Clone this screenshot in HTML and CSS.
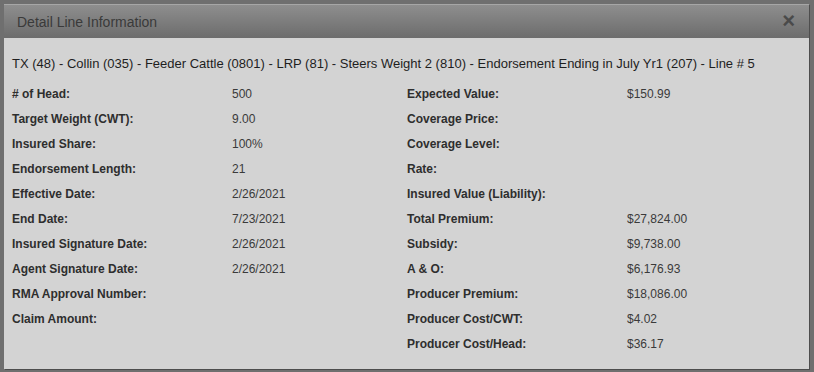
FILE: index.html
```html
<!DOCTYPE html>
<html lang="en">
<head>
    <meta charset="UTF-8">
    <title>Detail Line Information</title>
    <link rel="stylesheet" href="styles.css">
</head>
<body>
    <!-- Detail Line Dialog -->
    <div class="dialog">
        <div class="dialog-header">
            <span class="dialog-title">Detail Line Information</span>
            <span class="dialog-close">&times;</span>
        </div>

        <div class="dialog-body">
            <div class="line-name">TX (48) - Collin (035) - Feeder Cattle (0801) - LRP (81) - Steers Weight 2 (810) - Endorsement Ending in July Yr1 (207) - Line # 5</div>

            <div class="details">
                <!-- Left Column -->
                <div class="detail-table">
                    <div class="label"># of Head:</div><div class="value">500</div>
                    <div class="label">Target Weight (CWT):</div><div class="value">9.00</div>
                    <div class="label">Insured Share:</div><div class="value">100%</div>
                    <div class="label">Endorsement Length:</div><div class="value">21</div>
                    <div class="label">Effective Date:</div><div class="value">2/26/2021</div>
                    <div class="label">End Date:</div><div class="value">7/23/2021</div>
                    <div class="label">Insured Signature Date:</div><div class="value">2/26/2021</div>
                    <div class="label">Agent Signature Date:</div><div class="value">2/26/2021</div>
                    <div class="label">RMA Approval Number:</div><div class="value"></div>
                    <div class="label">Claim Amount:</div><div class="value"></div>
                </div>

                <!-- Right Column -->
                <div class="detail-table">
                    <div class="label">Expected Value:</div><div class="value">$150.99</div>
                    <div class="label">Coverage Price:</div><div class="value"></div>
                    <div class="label">Coverage Level:</div><div class="value"></div>
                    <div class="label">Rate:</div><div class="value"></div>
                    <div class="label">Insured Value (Liability):</div><div class="value"></div>
                    <div class="label">Total Premium:</div><div class="value">$27,824.00</div>
                    <div class="label">Subsidy:</div><div class="value">$9,738.00</div>
                    <div class="label">A &amp; O:</div><div class="value">$6,176.93</div>
                    <div class="label">Producer Premium:</div><div class="value">$18,086.00</div>
                    <div class="label">Producer Cost/CWT:</div><div class="value">$4.02</div>
                    <div class="label">Producer Cost/Head:</div><div class="value">$36.17</div>
                </div>
            </div>
        </div>
    </div>
</body>
</html>
```

FILE: styles.css
```css
body {
    margin: 0;
    padding: 4px 4px 4px 4px;
    background-color: #6f6f6f;
    font-family: "Liberation Sans", Arial, sans-serif;
    color: #333333;
}

/* Dialog Box */
.dialog {
    width: 805px;
    height: 364px;
    background-color: #d3d3d3;
    border-top: 1px solid #a6a6a6;
    box-shadow: 1px 1px 0 #4d4d4d;
    display: flex;
    flex-direction: column;
}

/* Header Bar */
.dialog-header {
    height: 33px;
    display: flex;
    align-items: center;
    justify-content: space-between;
    padding: 0 14px 0 13px;
    background: linear-gradient(to bottom, #8e8e8e, #6c6c6c);
}

.dialog-title {
    font-size: 14px;
    color: #3a3a3a;
}

.dialog-close {
    font-size: 22px;
    font-weight: bold;
    line-height: 1;
    color: #4a4a4a;
    margin-top: -2px;
}

/* Body */
.dialog-body {
    padding: 18px 8px 0 8px;
}

.line-name {
    font-size: 13px;
    line-height: 16px;
    color: #1e1e1e;
    margin-bottom: 9px;
    white-space: nowrap;
}

.details {
    display: grid;
    grid-template-columns: 395px 1fr;
}

.detail-table {
    display: grid;
    grid-template-columns: 220px 1fr;
    grid-auto-rows: 25px;
    align-items: center;
    font-size: 12px;
}

.label {
    font-weight: bold;
    color: #2e2e2e;
}

.value {
    color: #3a3a3a;
}
```
